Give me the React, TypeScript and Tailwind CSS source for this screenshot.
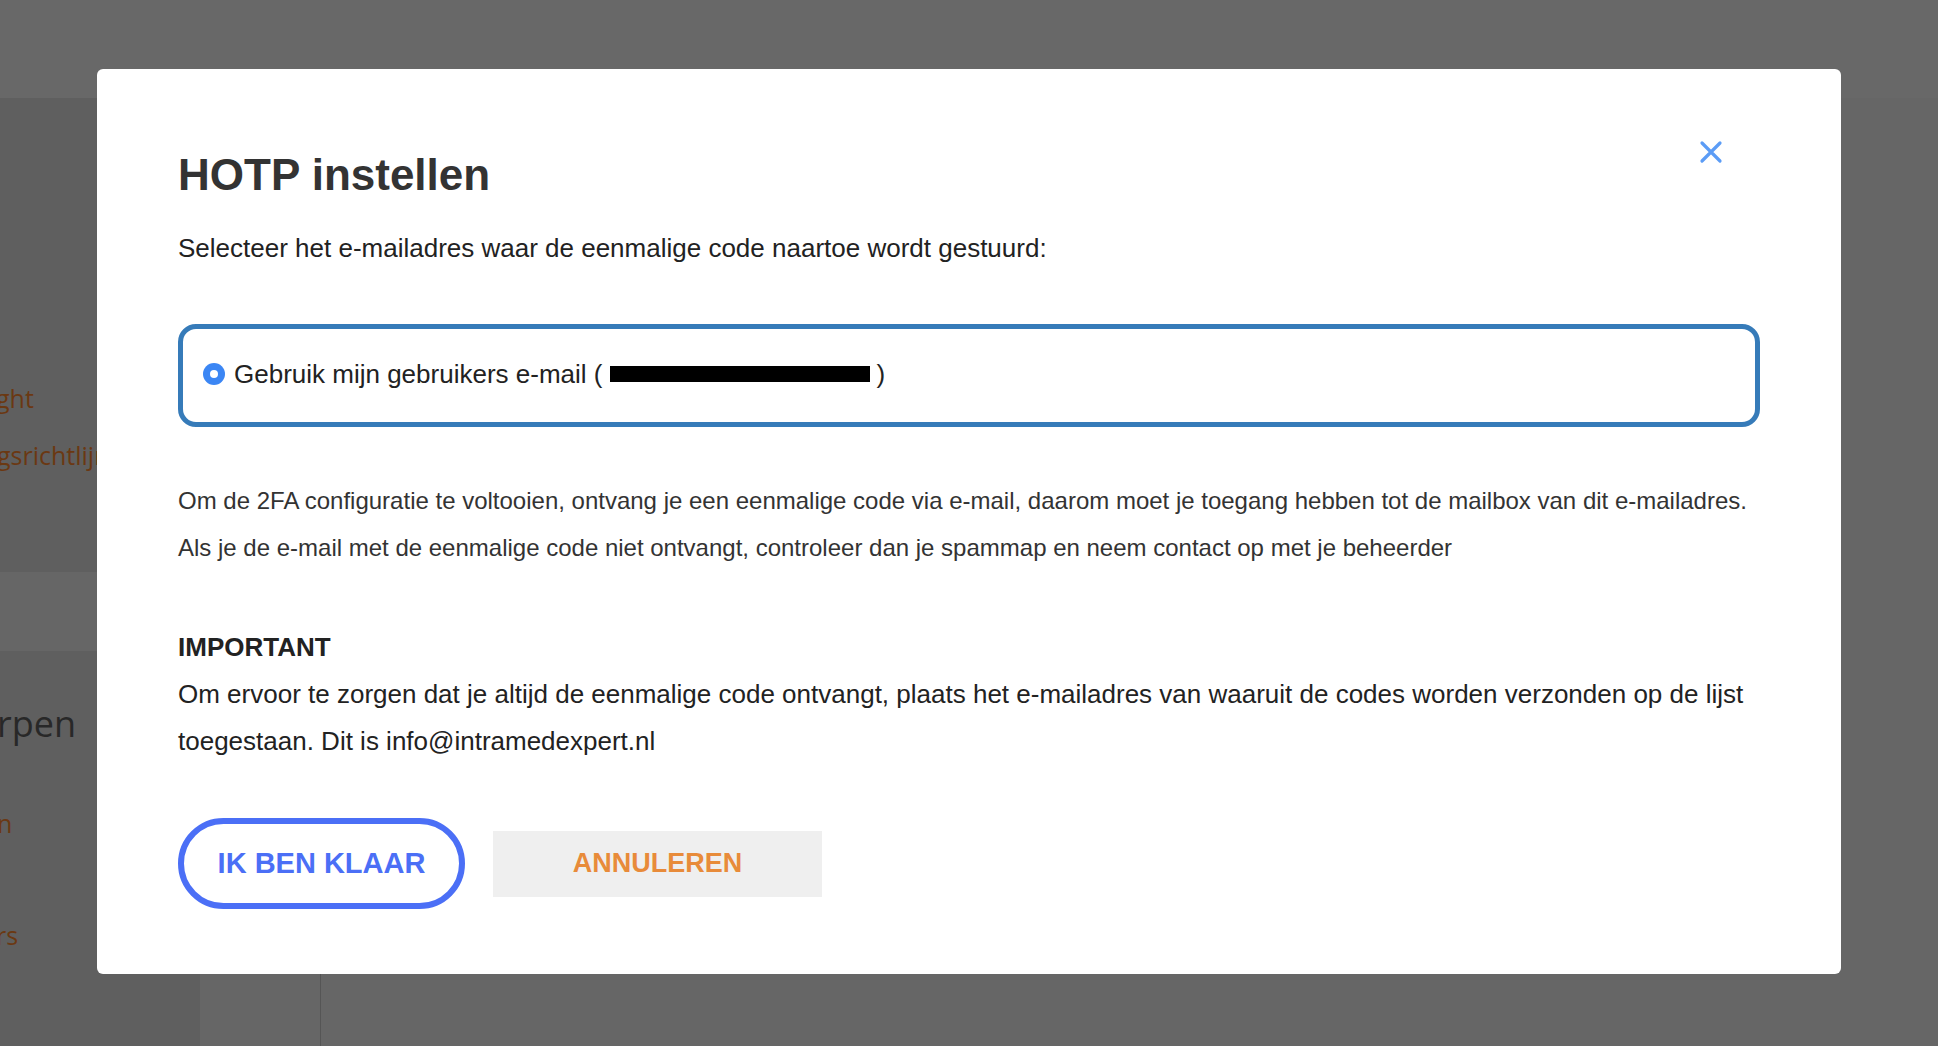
import React from "react";

const sans = { fontFamily: '"Liberation Sans", Arial, Helvetica, sans-serif' };

const CloseIcon: React.FC = () => (
    <svg width="24" height="24" viewBox="0 0 24 24" fill="none">
        <path
            d="M3 3L21 21M21 3L3 21"
            stroke="#5b9cf6"
            strokeWidth="3.2"
            strokeLinecap="round"
        />
    </svg>
);

const App: React.FC = () => {
    return (
        <div className="relative h-[1046px] w-[1938px] overflow-hidden bg-[#666666]">
            {/* dimmed page behind the dialog */}
            <div className="flex h-full flex-col font-['Open_Sans',sans-serif]">
                <div className="h-[98px] shrink-0 bg-[#686868]" />
                <div className="flex flex-1">
                    <aside className="flex w-[200px] shrink-0 flex-col overflow-hidden">
                        <div className="flex h-[474px] flex-col bg-[#5f5f5f] pt-[272px] text-[25px] leading-[57px] text-[#6b3812]">
                            <span className="-ml-[4px] whitespace-nowrap">ght</span>
                            <span className="-ml-[3px] whitespace-nowrap">gsrichtlijnen</span>
                        </div>
                        <div className="h-[79px] bg-[#666666]" />
                        <div className="flex flex-1 flex-col bg-[#5f5f5f] pt-[50px]">
                            <span className="-ml-[3px] whitespace-nowrap text-[36px] leading-[46px] text-[#282828]">
                                rpen
                            </span>
                            <span className="-ml-[3px] mt-[48px] text-[25px] leading-[57px] text-[#6b3812]">n</span>
                            <span className="-ml-[4px] mt-[55px] text-[25px] leading-[57px] text-[#6b3812]">rs</span>
                        </div>
                    </aside>
                    <div className="w-[121px] shrink-0 border-r border-[#555555]" />
                    <main className="flex-1" />
                </div>
            </div>

            {/* dialog */}
            <div className="absolute inset-0 flex justify-center pt-[69px]" style={sans}>
                <div className="relative h-[905px] w-[1744px] rounded-[6px] bg-white px-[81px] pt-[80px]">
                    <button className="absolute right-[118px] top-[71px] p-0">
                        <CloseIcon />
                    </button>

                    <h2 className="text-[44px] font-bold leading-[52px] text-[#333333]">HOTP instellen</h2>
                    <p className="mt-[31px] text-[26px] leading-[32px] text-[#222222]">
                        Selecteer het e-mailadres waar de eenmalige code naartoe wordt gestuurd:
                    </p>

                    <label className="mt-[60px] flex h-[103px] items-center rounded-[18px] border-[5px] border-[#367bb9] pl-[20px] pb-[4px]">
                        <span className="flex h-[22px] w-[22px] shrink-0 items-center justify-center rounded-full bg-[#3b86f4]">
                            <span className="h-[8px] w-[8px] rounded-full bg-white" />
                        </span>
                        <span className="ml-[9px] flex items-center text-[26px] leading-[32px] text-[#222222]">
                            Gebruik mijn gebruikers e-mail (
                            <span className="ml-[8px] inline-block h-[16px] w-[260px] bg-black" />
                            <span className="ml-[6px]">)</span>
                        </span>
                    </label>

                    <div className="mt-[50px] text-[24px] leading-[47px] text-[#333333]">
                        <p>
                            Om de 2FA configuratie te voltooien, ontvang je een eenmalige code via e-mail, daarom
                            moet je toegang hebben tot de mailbox van dit e-mailadres.
                        </p>
                        <p>
                            Als je de e-mail met de eenmalige code niet ontvangt, controleer dan je spammap en neem
                            contact op met je beheerder
                        </p>
                    </div>

                    <div className="mt-[53px] text-[26px] leading-[47px] text-[#222222]">
                        <strong className="block">IMPORTANT</strong>
                        <p>
                            Om ervoor te zorgen dat je altijd de eenmalige code ontvangt, plaats het e-mailadres van
                            waaruit de codes worden verzonden op de lijst toegestaan. Dit is info@intramedexpert.nl
                        </p>
                    </div>

                    <div className="mt-[53px] flex items-center gap-[28px]">
                        <button className="flex h-[91px] w-[287px] items-center justify-center rounded-full border-[6px] border-[#4b6ff6] text-[29px] font-bold text-[#4b6ff6]">
                            IK BEN KLAAR
                        </button>
                        <button className="flex h-[66px] w-[329px] items-center justify-center bg-[#efefef] text-[27px] font-bold text-[#e88b3a]">
                            ANNULEREN
                        </button>
                    </div>
                </div>
            </div>
        </div>
    );
};

export default App;
